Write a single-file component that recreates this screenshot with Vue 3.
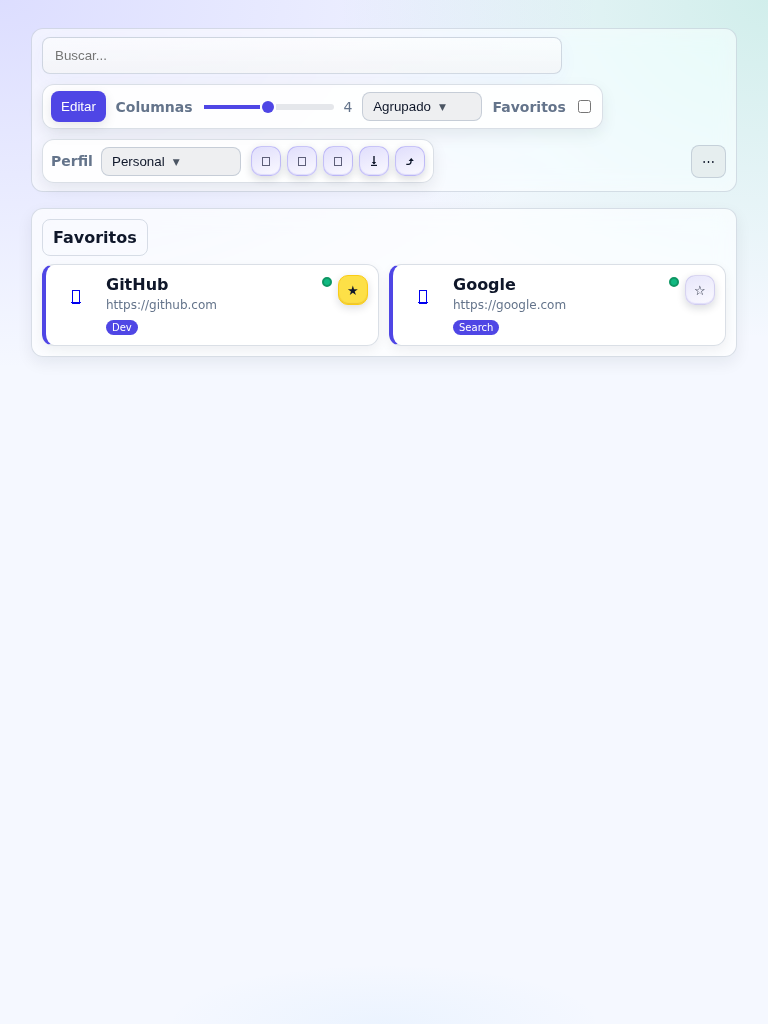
<script setup>
import { ref } from 'vue'

const columns = ref(4)
const tools = ['add', 'rename', 'remove', 'download', 'share']
const bookmarks = [
  { name: 'GitHub', url: 'https://github.com', tag: 'Dev', starred: true },
  { name: 'Google', url: 'https://google.com', tag: 'Search', starred: false },
]
</script>

<template>
  <main class="page">
    <header class="panel toolbar">
      <input class="search" type="text" placeholder="Buscar..." />
      <div class="group controls">
        <button class="edit">Editar</button>
        <span class="label cols">Columnas</span>
        <div class="slider"><i class="fill"></i><i class="thumb"></i><i class="rest"></i></div>
        <span class="count">{{ columns }}</span>
        <button class="select view">Agrupado<span class="arrow">▼</span></button>
        <span class="label fav">Favoritos</span>
        <input class="check" type="checkbox" />
      </div>
      <div class="bottom">
        <div class="group profile">
          <span class="label">Perfil</span>
          <button class="select person">Personal<span class="arrow">▼</span></button>
          <div class="tools">
            <button v-for="t in tools" :key="t" class="round tool">
              <svg v-if="t === 'download'" width="28" height="28" viewBox="0 0 28 28">
                <path d="M14 9V16.5" stroke="#0f172a" stroke-width="1.4" fill="none" />
                <path d="M11.8 15L14 17.6L16.2 15Z" fill="#0f172a" />
                <path d="M11 18.4H17" stroke="#0f172a" stroke-width="1.2" />
              </svg>
              <svg v-else-if="t === 'share'" width="28" height="28" viewBox="0 0 28 28">
                <path d="M10.3 17.4H12.4Q15 17.2 15 14.8V12.6" stroke="#0f172a" stroke-width="1.3" fill="none" />
                <path d="M12.6 13.9L15.3 11L17.8 13.9Z" fill="#0f172a" />
              </svg>
              <svg v-else width="28" height="28" viewBox="0 0 28 28">
                <rect x="10.5" y="10.5" width="7" height="8" fill="none" stroke="#5d5f78" stroke-width="1" />
              </svg>
            </button>
          </div>
        </div>
        <button class="more">⋯</button>
      </div>
    </header>

    <section class="panel favorites">
      <h2 class="heading">Favoritos</h2>
      <div class="grid">
        <article v-for="b in bookmarks" :key="b.name" class="card">
          <a class="icon" href="#">
            <svg width="40" height="40" viewBox="0 0 40 40">
              <rect x="16.5" y="15.5" width="7" height="12" fill="none" stroke="#0000ee" stroke-width="1" />
              <path d="M15 27.5H25" stroke="#0000ee" stroke-width="1" />
              <path d="M16 28.5H24" stroke="#0000ee" stroke-width="1" />
            </svg>
          </a>
          <div class="info">
            <div class="name">{{ b.name }}</div>
            <div class="url">{{ b.url }}</div>
            <span class="tag">{{ b.tag }}</span>
          </div>
          <i class="dot"></i>
          <button class="round star" :class="{ on: b.starred }">{{ b.starred ? '★' : '☆' }}</button>
        </article>
      </div>
    </section>
  </main>
</template>

<style>
body {
  margin: 0;
}
</style>

<style scoped>
* {
  box-sizing: border-box;
}
.page {
  height: 1024px;
  padding: 28px 31px;
  display: flex;
  flex-direction: column;
  gap: 16px;
  font-family: "DejaVu Sans", sans-serif;
  font-size: 16px;
  color: #0f172a;
  background:
    radial-gradient(600px 370px at 0% 0%, rgba(99, 91, 255, 0.17), transparent 100%),
    radial-gradient(430px 340px at 100% 0%, rgba(16, 185, 129, 0.155), transparent 100%),
    radial-gradient(220px 60px at 50% 100%, rgba(56, 160, 248, 0.05), transparent 100%),
    #f5f8ff;
}
.panel {
  border: 1px solid rgba(148, 163, 184, 0.35);
  border-radius: 12px;
  backdrop-filter: blur(10px) saturate(1.8);
}
.toolbar {
  height: 164px;
  padding: 8px 10px;
  display: flex;
  flex-direction: column;
  align-items: flex-start;
  gap: 10px;
  background: rgba(255, 255, 255, 0.6);
}
button, input {
  font-family: "Liberation Sans", Arial, sans-serif;
  font-size: 13.333px;
  color: #0f172a;
}
button {
  padding: 0;
  border: 0;
}
.search {
  width: 520px;
  height: 37px;
  flex: none;
  padding: 0 12px;
  border: 1px solid rgba(148, 163, 184, 0.4);
  border-radius: 8px;
  background: linear-gradient(rgba(255, 255, 255, 0.6), rgba(243, 244, 246, 0.75));
  box-shadow: 0 6px 20px rgba(79, 70, 229, 0.04);
}
.group {
  display: flex;
  align-items: center;
  border: 1px solid rgba(148, 163, 184, 0.35);
  border-radius: 12px;
  background: rgba(255, 255, 255, 0.88);
  box-shadow: 0 6px 16px rgba(15, 23, 42, 0.08);
}
.controls {
  width: 561px;
  height: 45px;
  flex: none;
  padding: 0 8px;
}
.edit {
  width: 55px;
  height: 31px;
  border-radius: 8px;
  background: #4f46e5;
  color: #fff;
  box-shadow: 0 4px 12px rgba(15, 23, 42, 0.1);
}
.label {
  font-size: 14px;
  font-weight: 700;
  color: #64748b;
}
.cols {
  width: 79px;
  margin-left: 9.5px;
}
.slider {
  display: flex;
  align-items: center;
  gap: 2px;
  width: 130px;
  margin-left: 9.5px;
}
.fill {
  width: 56px;
  height: 4px;
  background: #4f46e5;
}
.thumb {
  width: 12px;
  height: 12px;
  border-radius: 50%;
  background: #4f46e5;
}
.rest {
  flex: 1;
  height: 6px;
  border-radius: 0 3px 3px 0;
  background: #e5e7eb;
}
.count {
  width: 18.5px;
  margin-left: 9.5px;
  font-size: 14px;
  color: #64748b;
}
.select {
  height: 29px;
  padding-left: 10.2px;
  border: 1px solid rgba(148, 163, 184, 0.45);
  border-radius: 8px;
  background: #eeeff1;
  text-align: left;
}
.view {
  width: 120px;
}
.arrow {
  display: inline-block;
  margin-left: 8px;
  font-family: "DejaVu Sans", sans-serif;
  font-size: 9px;
  line-height: 9px;
  color: #4b5563;
  transform: translateY(-1px);
}
.fav {
  margin-left: 10.5px;
}
.check {
  width: 13px;
  height: 13px;
  margin: 0 0 0 12.4px;
}
.bottom {
  display: flex;
  align-items: center;
  justify-content: space-between;
  width: 100%;
}
.profile {
  width: 392px;
  height: 44px;
  padding: 0 8px;
}
.person {
  width: 140px;
  margin: 1px 10px 0 8px;
}
.tools {
  display: flex;
  gap: 6px;
}
.round {
  width: 30px;
  height: 30px;
  border: 1px solid rgba(79, 70, 229, 0.28);
  border-radius: 10px;
  background: linear-gradient(160deg, #e0defc, #fbfaff);
  box-shadow: 0 3px 8px rgba(15, 23, 42, 0.16), inset 0 -1px 1px rgba(79, 70, 229, 0.15);
}
.round svg, .icon svg {
  display: block;
}
.more {
  width: 35px;
  height: 33px;
  border: 1px solid rgba(148, 163, 184, 0.4);
  border-radius: 8px;
  background: #e6eeef;
}
.favorites {
  height: 149px;
  padding: 10px;
  background: rgba(255, 255, 255, 0.7);
  box-shadow: 0 6px 16px rgba(15, 23, 42, 0.07);
}
.heading {
  width: 106px;
  height: 37px;
  margin: 0 0 8px;
  padding-left: 10px;
  border: 1px solid rgba(148, 163, 184, 0.35);
  border-radius: 8px;
  font-size: 16px;
  line-height: 35px;
}
.grid {
  display: grid;
  grid-template-columns: 1fr 1fr;
  gap: 10px;
}
.card {
  display: flex;
  align-items: flex-start;
  height: 82px;
  padding: 10px 10px 0 10px;
  border: 1px solid rgba(148, 163, 184, 0.35);
  border-left: 4px solid #4f46e5;
  border-radius: 12px;
  background: rgba(255, 255, 255, 0.95);
  box-shadow: 0 4px 12px rgba(15, 23, 42, 0.06);
}
.icon {
  width: 40px;
  height: 40px;
}
.info {
  flex: 1;
  margin-left: 10px;
}
.name {
  height: 19px;
  font-weight: 700;
  line-height: 19px;
}
.url {
  height: 14px;
  margin-top: 4px;
  font-size: 12px;
  line-height: 14px;
  color: #64748b;
}
.tag {
  display: block;
  width: max-content;
  height: 15px;
  margin-top: 8px;
  padding: 0 6px;
  border-radius: 8px;
  background: #4f46e5;
  color: #fff;
  font-size: 10px;
  line-height: 15px;
}
.dot {
  width: 10px;
  height: 10px;
  margin: 2px 6px 0 0;
  border: 2px solid #0e9663;
  border-radius: 50%;
  background: #10b981;
}
.star {
  border-color: rgba(148, 140, 210, 0.3);
  background: linear-gradient(160deg, #e7e6fb, #fbfaff);
}
.star.on {
  border-color: #facc15;
  background: #fde047;
  box-shadow: 0 3px 8px rgba(15, 23, 42, 0.14), inset 0 -1px 1px rgba(202, 138, 4, 0.3);
}
</style>
